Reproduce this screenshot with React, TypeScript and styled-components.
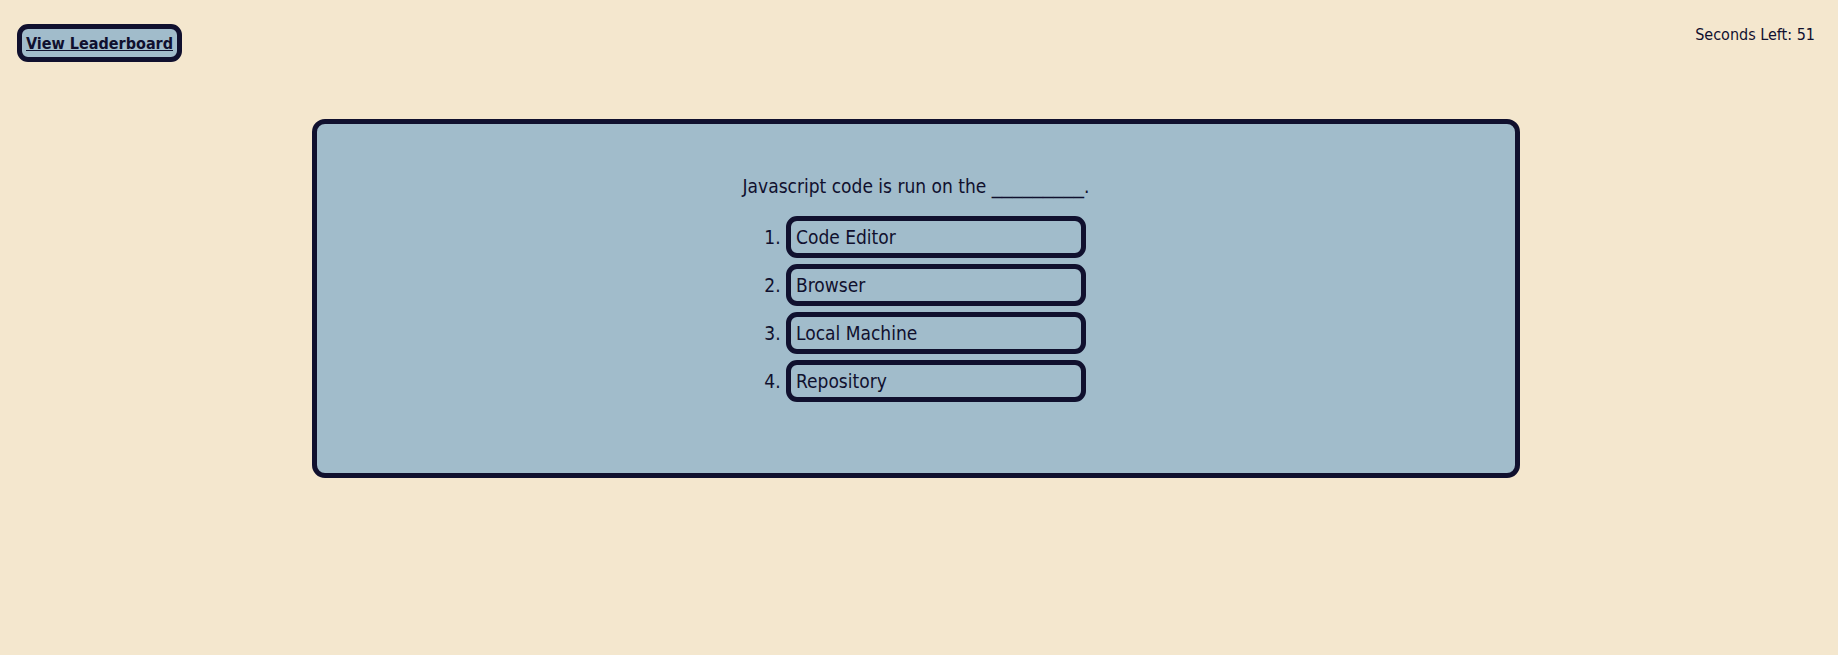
import React from "react";
import styled, { createGlobalStyle } from "styled-components";

const ink = "#10102e";

const GlobalStyle = createGlobalStyle`
  html, body {
    margin: 0;
    padding: 0;
    background: #f4e7ce;
  }
  body {
    font-family: "DejaVu Sans Condensed", "DejaVu Sans", sans-serif;
    font-stretch: condensed;
    color: ${ink};
  }
`;

const Page = styled.div`
  min-height: 655px;
  padding: 24px 23px 0 17px;
  box-sizing: border-box;
`;

const Header = styled.header`
  display: flex;
  justify-content: space-between;
  align-items: flex-start;
`;

const LeaderboardButton = styled.button`
  height: 38px;
  padding: 0 4px;
  background: #a1bccb;
  border: 5px solid ${ink};
  border-radius: 11px;
  color: ${ink};
  font-family: inherit;
  font-stretch: condensed;
  font-weight: bold;
  font-size: 16px;
  text-decoration: underline;
  cursor: pointer;
`;

const Timer = styled.div`
  font-size: 16px;
  line-height: 19px;
  padding-top: 1px;
`;

const Card = styled.main`
  width: 1208px;
  box-sizing: border-box;
  margin: 57px 0 0 295px;
  padding: 50px 0 71px;
  background: #a1bccb;
  border: 5px solid ${ink};
  border-radius: 13px;
  display: flex;
  flex-direction: column;
  align-items: center;
`;

const Question = styled.p`
  margin: 0 0 18px;
  font-size: 19px;
  line-height: 24px;
`;

// the blank is drawn wider in the original font
const Blank = styled.span`
  font-family: "DejaVu Sans", sans-serif;
  font-stretch: normal;
  font-size: 20.5px;
`;

const Options = styled.ol`
  margin: 0;
  padding-left: 40px;
  font-size: 19px;
`;

const Option = styled.li`
  margin-bottom: 6px;
  &:last-child {
    margin-bottom: 0;
  }
`;

const OptionButton = styled.button`
  display: block;
  width: 300px;
  height: 42px;
  padding: 0 5px;
  text-align: left;
  background: #a1bccb;
  border: 5px solid ${ink};
  border-radius: 11px;
  color: ${ink};
  font-family: inherit;
  font-stretch: condensed;
  font-size: 19px;
  cursor: pointer;
`;

const answers = ["Code Editor", "Browser", "Local Machine", "Repository"];

export default function App() {
  return (
    <Page>
      <GlobalStyle />
      <Header>
        <LeaderboardButton>View Leaderboard</LeaderboardButton>
        <Timer>Seconds Left: 51</Timer>
      </Header>
      <Card>
        <Question>
          Javascript code is run on the <Blank>_________</Blank>.
        </Question>
        <Options>
          {answers.map((a) => (
            <Option key={a}>
              <OptionButton>{a}</OptionButton>
            </Option>
          ))}
        </Options>
      </Card>
    </Page>
  );
}
